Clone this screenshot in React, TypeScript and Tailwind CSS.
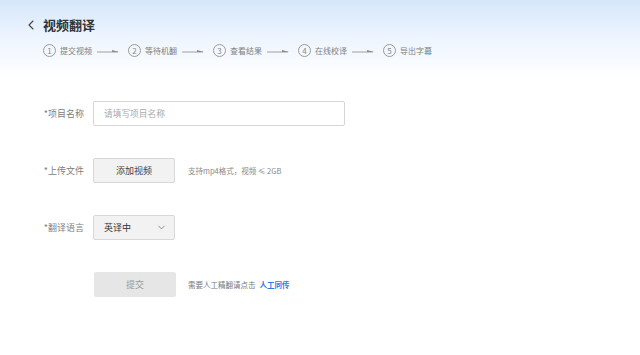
import { ChevronLeft, ChevronDown } from 'lucide-react'

const steps = ['提交视频', '等待机翻', '查看结果', '在线校译', '导出字幕']

function StepArrow() {
  return (
    <svg width="22" height="6" viewBox="0 0 22 6" className="ml-[5px] mr-[9px] text-[#8a8a8a]">
      <line x1="0" y1="4" x2="21" y2="4" stroke="currentColor" strokeWidth="0.8" />
      <path d="M15 2 L22 4 L15 4 Z" fill="currentColor" />
    </svg>
  )
}

export default function App() {
  const font = { fontFamily: '"Noto Sans CJK SC", "Noto Sans", sans-serif' }
  return (
    <div className="h-[355px] w-[640px] overflow-hidden bg-white" style={font}>
      <div className="h-[78px] bg-gradient-to-b from-[#d6e7fb] via-[#eef5fe] to-white">
        <div className="flex items-center pl-[23px] pt-[16px]">
          <ChevronLeft size={16} strokeWidth={1.6} className="text-[#444]" />
          <span className="ml-[4px] text-[13px] font-bold leading-[18px] text-[#333]">视频翻译</span>
        </div>
        <div className="mt-[10px] flex items-center pl-[43px]">
          {steps.map((s, i) => (
            <div key={s} className="flex items-center">
              <span className="flex h-[13px] w-[13px] items-center justify-center rounded-full border border-[#9a9a9a] text-[8px] leading-none text-[#888]">
                {i + 1}
              </span>
              <span className="ml-[4px] text-[8px] leading-[12px] text-[#808080]">{s}</span>
              {i < steps.length - 1 && <StepArrow />}
            </div>
          ))}
        </div>
      </div>

      <div className="mt-[23px] flex flex-col gap-[32px]">
        <div className="flex items-center">
          <label className="w-[84px] text-right text-[9px] text-[#808080]">*项目名称</label>
          <input
            placeholder="请填写项目名称"
            className="ml-[9px] h-[25px] w-[252px] rounded-[2px] border border-[#d6d6d6] px-[10px] text-[8.7px] text-[#333] outline-none placeholder:text-[#aaa]"
          />
        </div>
        <div className="flex items-center">
          <label className="w-[84px] text-right text-[9px] text-[#808080]">*上传文件</label>
          <button className="ml-[9px] h-[25px] w-[82px] rounded-[2px] border border-[#d8d8d8] bg-[#f2f2f2] text-[9px] font-normal text-[#444]">
            添加视频
          </button>
          <span className="ml-[13px] text-[7.5px] text-[#888]">支持mp4格式，视频 ≤ 2GB</span>
        </div>
        <div className="flex items-center">
          <label className="w-[84px] text-right text-[9px] text-[#808080]">*翻译语言</label>
          <div className="ml-[9px] flex h-[25px] w-[82px] items-center justify-between rounded-[2px] border border-[#d8d8d8] bg-[#f2f2f2] pl-[10px] pr-[7px]">
            <span className="text-[9px] text-[#333]">英译中</span>
            <ChevronDown size={11} strokeWidth={1.4} className="text-[#555]" />
          </div>
        </div>
        <div className="flex items-center">
          <div className="w-[84px]" />
          <button className="ml-[10px] h-[25px] w-[82px] rounded-[2px] bg-[#e6e6e6] text-[9px] text-[#999]">提交</button>
          <span className="ml-[12px] text-[7.5px] text-[#777]">需要人工精翻请点击</span>
          <span className="ml-[4px] text-[7.5px] font-bold text-[#2f7be5]">人工同传</span>
        </div>
      </div>
    </div>
  )
}
